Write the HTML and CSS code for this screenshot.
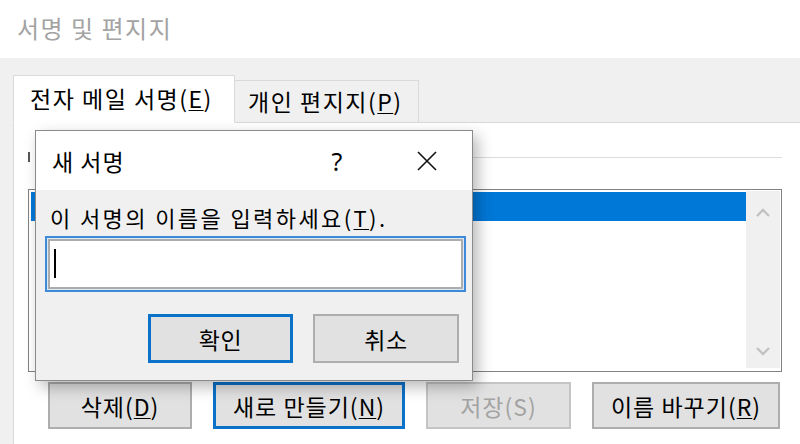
FILE: index.html
```html
<!DOCTYPE html>
<html>
<head>
	<title>서명 및 편지지</title>
	<link rel="stylesheet" href="styles.css">
</head>
<body>
	<div class="header">서명 및 편지지</div>
	<div class="main">
		<div class="tabs">
			<div class="tab active">전자 메일 서명(<u>E</u>)</div>
			<div class="tab">개인 편지지(<u>P</u>)</div>
		</div>
		<div class="panel">
			<div class="group-row">
				<span class="group-mark"></span>
				<span class="group-line"></span>
			</div>
			<div class="listbox">
				<div class="list-items">
					<div class="list-item selected"></div>
				</div>
				<div class="scrollbar">
					<svg width="14" height="9" viewBox="0 0 14 9"><path d="M1 8 L7 2 L13 8" fill="none" stroke="#c2c2c2" stroke-width="2.4"/></svg>
					<svg width="14" height="9" viewBox="0 0 14 9"><path d="M1 1 L7 7 L13 1" fill="none" stroke="#c2c2c2" stroke-width="2.4"/></svg>
				</div>
			</div>
			<div class="button-row">
				<button class="btn w-del">삭제(<u>D</u>)</button>
				<button class="btn btn-default w-new">새로 만들기(<u>N</u>)</button>
				<button class="btn btn-disabled w-save">저장(S)</button>
				<button class="btn w-ren">이름 바꾸기(<u>R</u>)</button>
			</div>
		</div>
	</div>

	<div class="dialog">
		<div class="dialog-title">
			<span class="dialog-name">새 서명</span>
			<span class="title-btn help">?</span>
			<span class="title-btn">
				<svg width="22" height="22" viewBox="0 0 22 22"><path d="M2 2 L20 20 M20 2 L2 20" stroke="#111" stroke-width="1.6"/></svg>
			</span>
		</div>
		<div class="dialog-body">
			<div class="dialog-label">이 서명의 이름을 입력하세요(<u>T</u>).</div>
			<div class="name-input"><span class="caret"></span></div>
			<div class="dialog-buttons">
				<button class="btn btn-default dlg-btn">확인</button>
				<button class="btn dlg-btn cancel">취소</button>
			</div>
		</div>
	</div>
</body>
</html>
```

FILE: styles.css
```css
body {
	margin: 0;
	background-color: #f0f0f0;
	font-family: "Noto Sans CJK KR", "Noto Sans", sans-serif;
	color: #000;
	overflow: hidden;
	height: 444px;
}
u {
	text-decoration-thickness: 1px;
	text-underline-offset: 2px;
}
.header {
	height: 58px;
	background-color: #fff;
	padding-left: 17px;
	font-size: 24px;
	line-height: 56px;
	letter-spacing: 1.5px;
	color: #a3a3a3;
}
.main {
	padding: 17px 0 0 13px;
}
.tabs {
	display: flex;
	align-items: flex-end;
	position: relative;
	z-index: 1;
	margin-bottom: -1px;
}
.tab {
	box-sizing: border-box;
	height: 43px;
	width: 184px;
	padding-left: 13px;
	border: 1px solid #d9d9d9;
	border-left: none;
	background-color: #f0f0f0;
	font-size: 23px;
	line-height: 40px;
	letter-spacing: 1.5px;
	white-space: nowrap;
}
.tab.active {
	height: 48px;
	width: 222px;
	padding-left: 16px;
	border-left: 1px solid #d9d9d9;
	border-bottom: 1px solid #fff;
	background-color: #fff;
	line-height: 44px;
}
.panel {
	background-color: #fff;
	border-top: 1px solid #d9d9d9;
	border-left: 1px solid #d9d9d9;
	height: 330px;
	padding: 0 18px 0 14px;
}
.group-row {
	display: flex;
	align-items: center;
	height: 22px;
	margin-top: 23px;
}
.group-mark {
	width: 2px;
	height: 10px;
	margin-right: 60px;
	background-color: #555;
}
.group-line {
	flex: 1;
	border-top: 1px solid #dcdcdc;
}
.listbox {
	display: flex;
	box-sizing: border-box;
	height: 183px;
	margin-top: 21px;
	border: 1px solid #828282;
	padding: 1px 1px 3px 2px;
}
.list-items {
	flex: 1;
	padding-top: 1px;
}
.list-item {
	height: 29px;
}
.list-item.selected {
	background-color: #0078d7;
}
.scrollbar {
	width: 34px;
	background-color: #f0f0f0;
	display: flex;
	flex-direction: column;
	justify-content: space-between;
	align-items: center;
	padding: 17px 0 12px;
}
.button-row {
	display: flex;
	gap: 21px;
	margin: 10px 0 0 20px;
}
.btn {
	box-sizing: border-box;
	height: 47px;
	background-color: #e1e1e1;
	border: 2px solid #adadad;
	font-family: "Noto Sans CJK KR", "Noto Sans", sans-serif;
	font-size: 23px;
	letter-spacing: 1px;
	color: #000;
	padding: 0;
	white-space: nowrap;
}
.btn-default {
	border: 3px solid #0a72c9;
}
.btn-disabled {
	color: #a3a3a3;
	border-color: #c4c4c4;
}
.w-del { width: 144px; }
.w-new { width: 192px; }
.w-save { width: 145px; }
.w-ren { width: 188px; }

.dialog {
	position: absolute;
	left: 35px;
	top: 130px;
	width: 438px;
	height: 251px;
	box-sizing: border-box;
	border: 1px solid #8a8a8a;
	background-color: #f0f0f0;
	box-shadow: 5px 6px 14px rgba(0, 0, 0, 0.28);
	z-index: 5;
}
.dialog-title {
	display: flex;
	align-items: center;
	height: 59px;
	background-color: #fff;
}
.dialog-name {
	flex: 1;
	padding-left: 16px;
	font-size: 23px;
	letter-spacing: 1px;
}
.title-btn {
	width: 90px;
	display: flex;
	justify-content: center;
	align-items: center;
}
.help {
	font-family: "Noto Sans", sans-serif;
	font-size: 25px;
}
.dialog-body {
	padding: 13px 13px 0 14px;
}
.dialog-label {
	font-size: 22px;
	line-height: 28px;
	letter-spacing: 2.4px;
	white-space: nowrap;
}
.name-input {
	box-sizing: border-box;
	height: 56px;
	width: 421px;
	margin: 5px 0 0 -5px;
	background-color: #fff;
	border: 2px solid #3f8ad8;
	box-shadow: inset 0 0 0 1px #dde8f6, inset 0 0 0 3px #acacac;
	padding: 11px 0 0 7px;
}
.caret {
	display: block;
	width: 2px;
	height: 29px;
	background-color: #000;
}
.dialog-buttons {
	display: flex;
	justify-content: flex-end;
	gap: 20px;
	margin-top: 22px;
}
.dlg-btn {
	width: 145px;
	height: 49px;
	letter-spacing: 0.5px;
}
.dlg-btn.cancel {
	width: 146px;
}
```
